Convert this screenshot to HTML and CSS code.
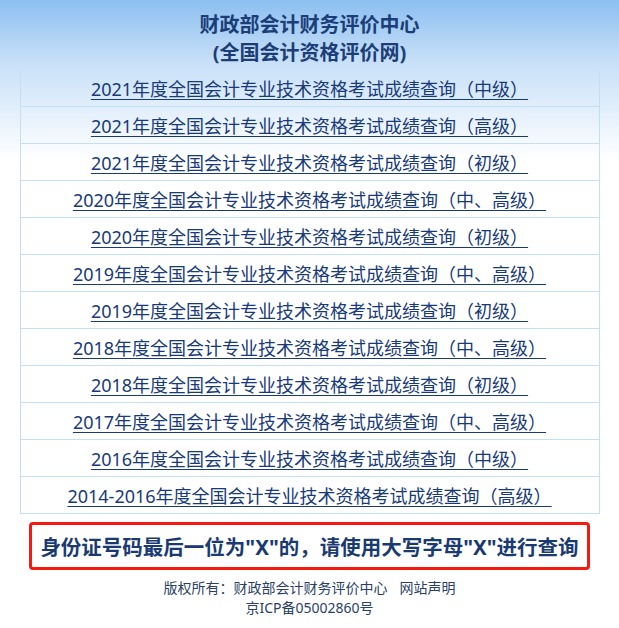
FILE: index.html
```html
<!DOCTYPE html>
<html lang="zh-CN">
<head>
<meta charset="utf-8">
<title>全国会计资格评价网</title>
<link rel="stylesheet" href="styles.css">
</head>
<body>
<div class="page">
  <div class="title">
    <div>财政部会计财务评价中心</div>
    <div>(全国会计资格评价网)</div>
  </div>
  <ul class="list">
    <li><a href="#">2021年度全国会计专业技术资格考试成绩查询（中级）</a></li>
    <li><a href="#">2021年度全国会计专业技术资格考试成绩查询（高级）</a></li>
    <li><a href="#">2021年度全国会计专业技术资格考试成绩查询（初级）</a></li>
    <li><a href="#">2020年度全国会计专业技术资格考试成绩查询（中、高级）</a></li>
    <li><a href="#">2020年度全国会计专业技术资格考试成绩查询（初级）</a></li>
    <li><a href="#">2019年度全国会计专业技术资格考试成绩查询（中、高级）</a></li>
    <li><a href="#">2019年度全国会计专业技术资格考试成绩查询（初级）</a></li>
    <li><a href="#">2018年度全国会计专业技术资格考试成绩查询（中、高级）</a></li>
    <li><a href="#">2018年度全国会计专业技术资格考试成绩查询（初级）</a></li>
    <li><a href="#">2017年度全国会计专业技术资格考试成绩查询（中、高级）</a></li>
    <li><a href="#">2016年度全国会计专业技术资格考试成绩查询（中级）</a></li>
    <li><a href="#">2014-2016年度全国会计专业技术资格考试成绩查询（高级）</a></li>
  </ul>
  <div class="notice">身份证号码最后一位为"X"的，请使用大写字母"X"进行查询</div>
  <div class="footer">
    <div>版权所有：财政部会计财务评价中心<span class="sp"></span>网站声明</div>
    <div>京ICP备05002860号</div>
  </div>
</div>
</body>
</html>
```
FILE: styles.css
```css
html, body {
  margin: 0;
  padding: 0;
}
body {
  background: #ffffff linear-gradient(to bottom, #8cbff0 0px, #c6dff8 60px, #ffffff 160px) no-repeat;
  font-family: "Noto Sans", "Noto Sans CJK SC", sans-serif;
  color: #1b3c78;
}
.page {
  padding-top: 11px;
}
.title {
  text-align: center;
  font-size: 20px;
  font-weight: bold;
  line-height: 28px;
  color: #1b3e79;
}
.list {
  list-style: none;
  margin: 3px auto 0;
  padding: 0;
  width: 578px;
  border-left: 1px solid #c2e0f2;
  border-right: 1px solid #c2e0f2;
}
.list li {
  height: 36px;
  border-bottom: 1px solid #c2e0f2;
  display: flex;
  align-items: center;
  justify-content: center;
  font-size: 18px;
  padding-bottom: 1px;
  box-sizing: border-box;
  height: 37px;
}
.list a {
  color: #173a7a;
  text-decoration: underline;
  text-underline-offset: 3px;
}
.notice {
  box-sizing: border-box;
  width: 561px;
  height: 48px;
  margin: 8px auto 0;
  border: 3px solid #f5190f;
  border-radius: 4px;
  display: flex;
  align-items: center;
  justify-content: center;
  font-size: 20.5px;
  font-weight: bold;
  color: #1a3a74;
}
.footer {
  margin-top: 8px;
  text-align: center;
  font-size: 14px;
  line-height: 20px;
  color: #2a3f66;
}
.sp {
  display: inline-block;
  width: 12px;
}
```
